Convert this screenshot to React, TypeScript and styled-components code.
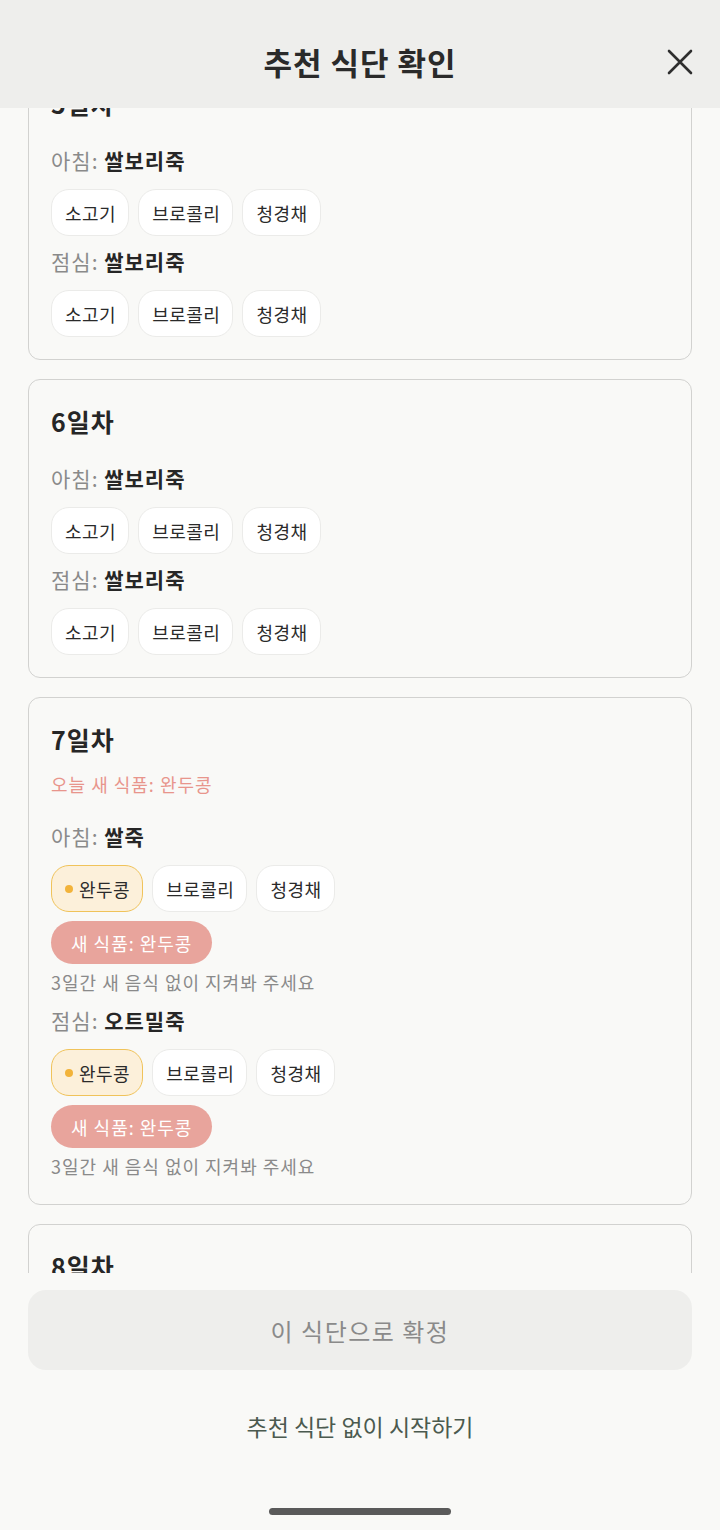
import React from 'react';
import styled, { createGlobalStyle } from 'styled-components';

interface Meal {
  label: string;
  menu: string;
  foods: string[];
  newFood?: string;
}

interface Day {
  day: number;
  todayNew?: string;
  meals: Meal[];
}

const days: Day[] = [
  {
    day: 5,
    meals: [
      { label: '아침', menu: '쌀보리죽', foods: ['소고기', '브로콜리', '청경채'] },
      { label: '점심', menu: '쌀보리죽', foods: ['소고기', '브로콜리', '청경채'] },
    ],
  },
  {
    day: 6,
    meals: [
      { label: '아침', menu: '쌀보리죽', foods: ['소고기', '브로콜리', '청경채'] },
      { label: '점심', menu: '쌀보리죽', foods: ['소고기', '브로콜리', '청경채'] },
    ],
  },
  {
    day: 7,
    todayNew: '완두콩',
    meals: [
      { label: '아침', menu: '쌀죽', foods: ['완두콩', '브로콜리', '청경채'], newFood: '완두콩' },
      { label: '점심', menu: '오트밀죽', foods: ['완두콩', '브로콜리', '청경채'], newFood: '완두콩' },
    ],
  },
  {
    day: 8,
    meals: [
      { label: '아침', menu: '쌀죽', foods: ['완두콩', '브로콜리', '청경채'] },
    ],
  },
];

function App(): JSX.Element {
  return (
    <>
      <GlobalStyle />
      <Screen>
        <Header>
          <HeaderTitle>추천 식단 확인</HeaderTitle>
          <CloseButton aria-label="닫기">
            <svg width="26" height="26" viewBox="0 0 26 26" fill="none">
              <path d="M2 2L24 24M24 2L2 24" stroke="#2e2e2e" strokeWidth="2.6" strokeLinecap="round" />
            </svg>
          </CloseButton>
        </Header>

        <Viewport>
          <CardList>
            {days.map((d) => (
              <DayCard key={d.day}>
                <DayTitle>{d.day}일차</DayTitle>
                {d.todayNew && <TodayNew>오늘 새 식품: {d.todayNew}</TodayNew>}
                {d.meals.map((m, idx) => (
                  <MealBlock key={idx} first={idx === 0}>
                    <MealLine>
                      <MealLabel>{m.label}: </MealLabel>
                      <MealMenu>{m.menu}</MealMenu>
                    </MealLine>
                    <ChipRow>
                      {m.foods.map((f) => {
                        const isNew = f === m.newFood;
                        return (
                          <Chip key={f} isNew={isNew}>
                            {isNew && <Dot />}
                            {f}
                          </Chip>
                        );
                      })}
                    </ChipRow>
                    {m.newFood && (
                      <>
                        <NewBadge>새 식품: {m.newFood}</NewBadge>
                        <Note>3일간 새 음식 없이 지켜봐 주세요</Note>
                      </>
                    )}
                  </MealBlock>
                ))}
              </DayCard>
            ))}
          </CardList>
        </Viewport>

        <Footer>
          <ConfirmButton>이 식단으로 확정</ConfirmButton>
          <SkipLink>추천 식단 없이 시작하기</SkipLink>
          <HomeBar />
        </Footer>
      </Screen>
    </>
  );
}

const GlobalStyle = createGlobalStyle`
  html, body {
    margin: 0;
    padding: 0;
    background: #f9f9f7;
  }
  body {
    font-family: 'Noto Sans CJK KR', 'Noto Sans', sans-serif;
    color: #222;
  }
  * {
    box-sizing: border-box;
  }
`;

const Screen = styled.div`
  width: 720px;
  height: 1530px;
  display: flex;
  flex-direction: column;
  background: #f9f9f7;
  overflow: hidden;
`;

const Header = styled.header`
  position: relative;
  height: 108px;
  flex-shrink: 0;
  display: flex;
  align-items: center;
  justify-content: center;
  padding-top: 16px;
  background: #eeeeec;
  z-index: 2;
`;

const HeaderTitle = styled.h1`
  margin: 0;
  font-size: 31px;
  font-weight: 700;
  line-height: 40px;
  color: #2a2a2a;
  letter-spacing: 1px;
`;

const CloseButton = styled.button`
  position: absolute;
  right: 27px;
  top: 49px;
  width: 26px;
  height: 26px;
  padding: 0;
  border: none;
  background: none;
  display: flex;
`;

const Viewport = styled.main`
  height: 1165px;
  flex-shrink: 0;
  overflow: hidden;
`;

const CardList = styled.div`
  display: flex;
  flex-direction: column;
  gap: 19px;
  padding: 0 28px;
  margin-top: -47px;
`;

const DayCard = styled.section`
  border: 1.5px solid #d2d2d0;
  border-radius: 12px;
  padding: 23px 22px 22px;
  background: #f9f9f7;
`;

const DayTitle = styled.h2`
  margin: 0;
  font-size: 25px;
  font-weight: 700;
  line-height: 36px;
  color: #262626;
  letter-spacing: 1px;
`;

const TodayNew = styled.div`
  margin-top: 14px;
  font-size: 18px;
  line-height: 26px;
  color: #e8958c;
  letter-spacing: 1px;
`;

const MealBlock = styled.div<{ first: boolean }>`
  margin-top: ${({ first }) => (first ? '24px' : '10px')};
`;

const MealLine = styled.div`
  font-size: 21px;
  line-height: 30px;
  letter-spacing: 1px;
`;

const MealLabel = styled.span`
  color: #8a8a8a;
`;

const MealMenu = styled.span`
  font-weight: 700;
  color: #262626;
`;

const ChipRow = styled.div`
  display: flex;
  gap: 9px;
  margin-top: 14px;
`;

const Chip = styled.span<{ isNew: boolean }>`
  display: inline-flex;
  align-items: center;
  gap: 6px;
  height: 47px;
  padding: 0 12px 0 13px;
  border-radius: 18px;
  font-size: 18px;
  letter-spacing: 0.5px;
  color: #2a2a2a;
  border: ${({ isNew }) => (isNew ? '1.5px solid #f0c35a' : '1px solid #ebebe9')};
  background: ${({ isNew }) => (isNew ? '#fcf0da' : '#ffffff')};
`;

const Dot = styled.span`
  width: 8px;
  height: 8px;
  border-radius: 50%;
  background: #f2b33a;
`;

const NewBadge = styled.div`
  display: inline-flex;
  align-items: center;
  height: 43px;
  margin-top: 9px;
  padding: 0 20px;
  border-radius: 22px;
  background: #e8a49c;
  color: #ffffff;
  font-size: 18px;
  letter-spacing: 1px;
`;

const Note = styled.div`
  margin-top: 5px;
  margin-bottom: 3px;
  font-size: 18px;
  line-height: 26px;
  color: #8a8a8a;
  letter-spacing: 1px;
`;

const Footer = styled.footer`
  flex: 1;
  display: flex;
  flex-direction: column;
  align-items: center;
  padding: 17px 28px 0;
`;

const ConfirmButton = styled.button`
  width: 100%;
  height: 80px;
  border: none;
  border-radius: 18px;
  background: #eeeeec;
  color: #8a8a8a;
  font-family: inherit;
  font-size: 24px;
  letter-spacing: 1.5px;
`;

const SkipLink = styled.div`
  margin-top: 40px;
  font-size: 23px;
  line-height: 32px;
  color: #4b5a4f;
`;

const HomeBar = styled.div`
  margin-top: 66px;
  width: 182px;
  height: 7px;
  border-radius: 4px;
  background: #5a5a5a;
`;

export default App;
